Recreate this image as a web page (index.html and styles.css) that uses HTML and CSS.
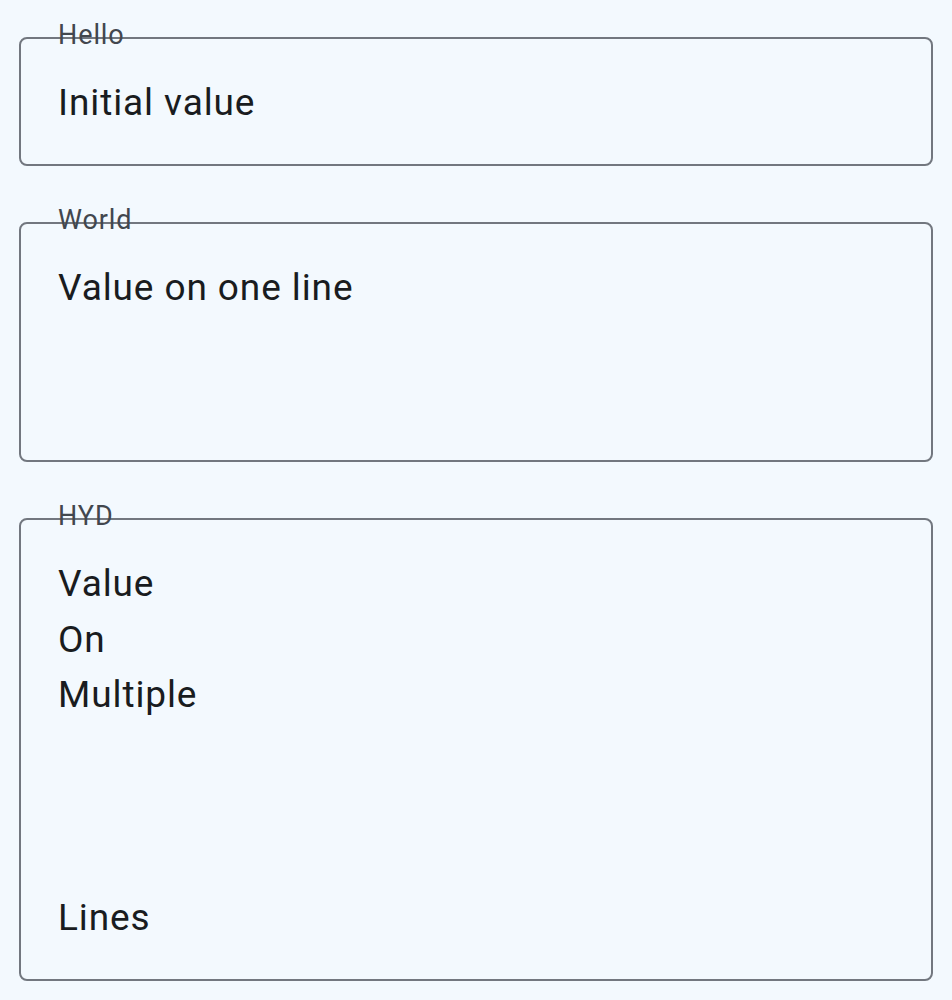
FILE: index.html
```html
<!DOCTYPE html>
<html lang="en">
<head>
    <meta charset="UTF-8">
    <meta name="viewport" content="width=device-width, initial-scale=1.0">
    <title>Text Fields</title>
    <link rel="stylesheet" href="styles.css">
</head>
<body>
    <div class="form">
        <div class="field single">
            <span class="label">Hello</span>
            <div class="value">Initial value</div>
        </div>

        <div class="field lines-3">
            <span class="label">World</span>
            <div class="value">Value on one line</div>
        </div>

        <div class="field lines-7">
            <span class="label">HYD</span>
            <div class="value">Value<br>On<br>Multiple<br><br><br><br>Lines</div>
        </div>
    </div>
</body>
</html>
```

FILE: styles.css
```css
* {
    box-sizing: border-box;
    margin: 0;
    padding: 0;
    font-family: Roboto, "Liberation Sans", sans-serif;
}

body {
    background-color: #f3f9fe;
    color: #191c20;
}

.form {
    display: flex;
    flex-direction: column;
    gap: 56px;
    padding: 37px 19px 0;
}

.field {
    position: relative;
    border: 2px solid #72777f;
    border-radius: 8px;
    padding: 36px 36px 34px 37px;
}

.value {
    font-size: 37px;
    line-height: 55.6px;
    letter-spacing: 0.9px;
}

.single {
    display: flex;
    align-items: center;
    height: 129px;
    padding-top: 2px;
    padding-bottom: 0;
}

.lines-3 .value {
    min-height: 166px;
}

/* label sits on the top border, the line runs through it */
.label {
    position: absolute;
    top: -22px;
    left: 37px;
    font-size: 27px;
    line-height: 36px;
    letter-spacing: 0.9px;
    color: #42474e;
}
```
